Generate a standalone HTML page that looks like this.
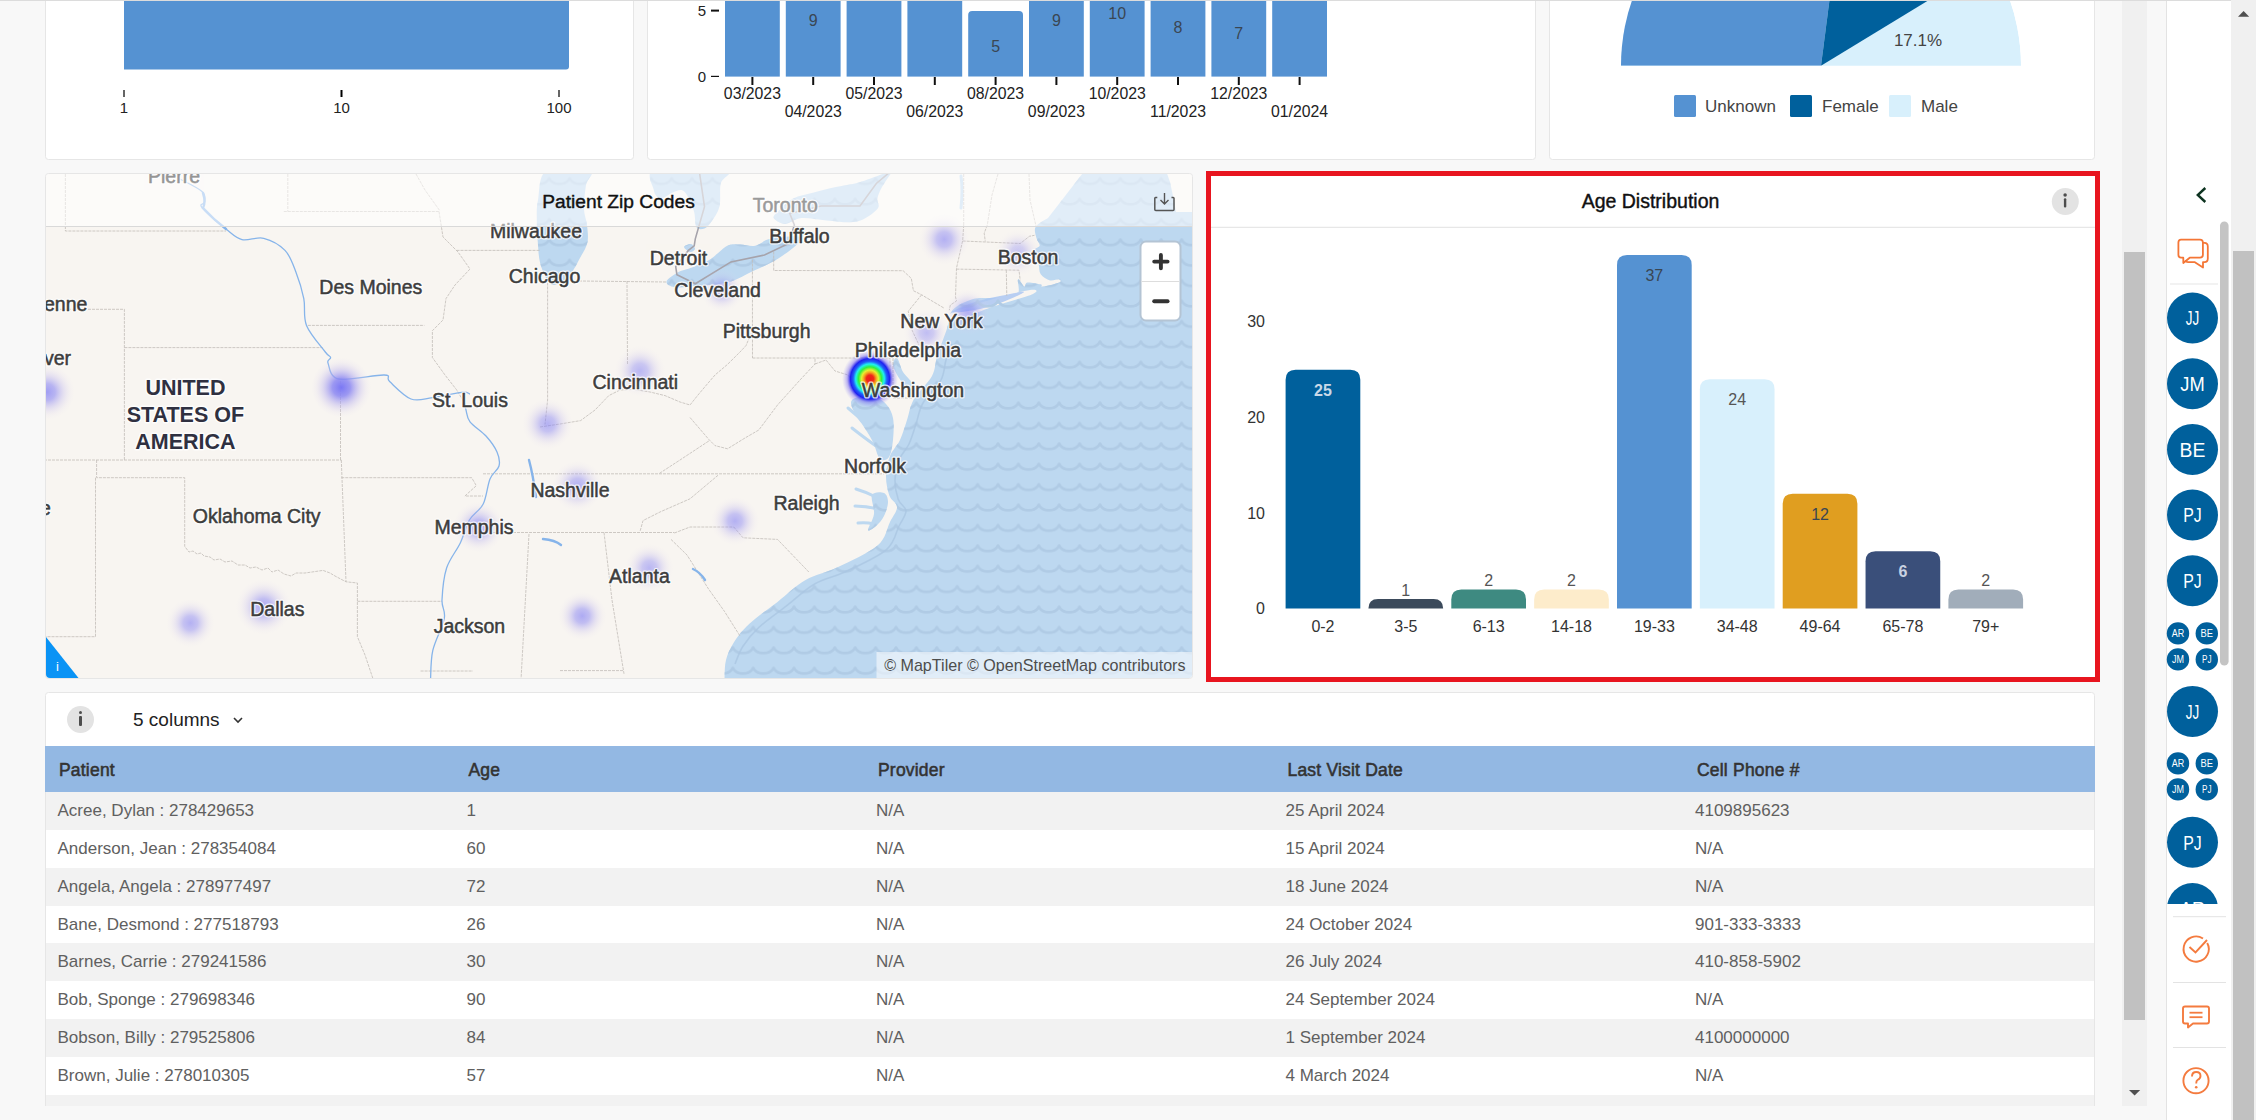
<!DOCTYPE html>
<html><head><meta charset="utf-8">
<style>
*{box-sizing:border-box;margin:0;padding:0}
html,body{width:2256px;height:1120px;overflow:hidden;background:#f8f8f8;font-family:"Liberation Sans",sans-serif}
.abs{position:absolute}
.card{position:absolute;background:#fff;border:1px solid #e6e6e6;border-radius:3.5px}
svg text{font-family:"Liberation Sans",sans-serif}
</style></head><body>

<!-- top cards -->
<div class="card" style="left:45px;top:-10px;width:589px;height:170px"></div>
<div class="card" style="left:647px;top:-10px;width:889px;height:170px"></div>
<div class="card" style="left:1549px;top:-10px;width:546px;height:170px"></div>

<svg class="abs" style="left:0;top:0" width="2166" height="160"><path d="M124 0 H569 V66.5 Q569 69.5 566 69.5 H124 Z" fill="#5592d2"/><rect x="123.4" y="90" width="1.2" height="7" fill="#000"/><rect x="340.5" y="90" width="2" height="7" fill="#000"/><rect x="558.4" y="90" width="1.2" height="7" fill="#000"/><text x="124" y="113" font-size="15" fill="#222" text-anchor="middle">1</text><text x="341.5" y="113" font-size="15" fill="#222" text-anchor="middle">10</text><text x="559" y="113" font-size="15" fill="#222" text-anchor="middle">100</text><rect x="725.0" y="0" width="54.8" height="76.6" fill="#5592d2"/><rect x="751.4" y="77" width="2" height="8" fill="#111"/><text x="752.4" y="99" font-size="15.8" fill="#222" text-anchor="middle">03/2023</text><rect x="785.8" y="0" width="54.8" height="76.6" fill="#5592d2"/><rect x="812.1999999999999" y="77" width="2" height="8" fill="#111"/><text x="813.1999999999999" y="117" font-size="15.8" fill="#222" text-anchor="middle">04/2023</text><text x="813.1999999999999" y="26" font-size="16" fill="#3a4653" text-anchor="middle">9</text><rect x="846.6" y="0" width="54.8" height="76.6" fill="#5592d2"/><rect x="873.0" y="77" width="2" height="8" fill="#111"/><text x="874.0" y="99" font-size="15.8" fill="#222" text-anchor="middle">05/2023</text><rect x="907.4" y="0" width="54.8" height="76.6" fill="#5592d2"/><rect x="933.8" y="77" width="2" height="8" fill="#111"/><text x="934.8" y="117" font-size="15.8" fill="#222" text-anchor="middle">06/2023</text><path d="M968.2 76.6 V15.1 Q968.2 11.1 972.2 11.1 H1019.0 Q1023.0 11.1 1023.0 15.1 V76.6 Z" fill="#5592d2"/><rect x="994.6" y="77" width="2" height="8" fill="#111"/><text x="995.6" y="99" font-size="15.8" fill="#222" text-anchor="middle">08/2023</text><text x="995.6" y="52" font-size="16" fill="#3a4653" text-anchor="middle">5</text><rect x="1029.0" y="0" width="54.8" height="76.6" fill="#5592d2"/><rect x="1055.4" y="77" width="2" height="8" fill="#111"/><text x="1056.4" y="117" font-size="15.8" fill="#222" text-anchor="middle">09/2023</text><text x="1056.4" y="26" font-size="16" fill="#3a4653" text-anchor="middle">9</text><rect x="1089.8" y="0" width="54.8" height="76.6" fill="#5592d2"/><rect x="1116.2" y="77" width="2" height="8" fill="#111"/><text x="1117.2" y="99" font-size="15.8" fill="#222" text-anchor="middle">10/2023</text><text x="1117.2" y="19" font-size="16" fill="#3a4653" text-anchor="middle">10</text><rect x="1150.6" y="0" width="54.8" height="76.6" fill="#5592d2"/><rect x="1177.0" y="77" width="2" height="8" fill="#111"/><text x="1178.0" y="117" font-size="15.8" fill="#222" text-anchor="middle">11/2023</text><text x="1178.0" y="33" font-size="16" fill="#3a4653" text-anchor="middle">8</text><rect x="1211.4" y="0" width="54.8" height="76.6" fill="#5592d2"/><rect x="1237.8000000000002" y="77" width="2" height="8" fill="#111"/><text x="1238.8000000000002" y="99" font-size="15.8" fill="#222" text-anchor="middle">12/2023</text><text x="1238.8000000000002" y="39" font-size="16" fill="#3a4653" text-anchor="middle">7</text><rect x="1272.1999999999998" y="0" width="54.8" height="76.6" fill="#5592d2"/><rect x="1298.6" y="77" width="2" height="8" fill="#111"/><text x="1299.6" y="117" font-size="15.8" fill="#222" text-anchor="middle">01/2024</text><rect x="711" y="9.6" width="8" height="2" fill="#111"/><rect x="711" y="75.8" width="8" height="1.2" fill="#111"/><text x="706" y="16" font-size="15" fill="#222" text-anchor="end">5</text><text x="706" y="82" font-size="15" fill="#222" text-anchor="end">0</text><clipPath id="pc"><path d="M1621 65.7 A200 200 0 0 1 2021 65.7 Z"/></clipPath><g clip-path="url(#pc)"><circle cx="1821" cy="65.7" r="200" fill="#d8f0fc"/><path d="M1821 65.7 L1521 65.7 L1521 -300 L1855.0 -197.10000000000002 Z" fill="#5592d2"/><path d="M1821 65.7 L1855.0 -197.10000000000002 L2253 -197.10000000000002 Z" fill="#00609c"/></g><text x="1918" y="45.5" font-size="17" fill="#444" text-anchor="middle">17.1%</text><rect x="1674" y="95" width="22" height="22" rx="1.5" fill="#5592d2"/><text x="1705" y="112" font-size="17" fill="#444">Unknown</text><rect x="1790" y="95" width="22" height="22" rx="1.5" fill="#00609c"/><text x="1822" y="112" font-size="17" fill="#444">Female</text><rect x="1889" y="95" width="22" height="22" rx="1.5" fill="#d8f0fc"/><text x="1921" y="112" font-size="17" fill="#444">Male</text></svg>
<!-- map card -->
<div class="card" style="left:45px;top:173px;width:1148px;height:506px"></div>
<!--MAPSTART--><svg class="abs" style="left:0;top:0" width="1200" height="690">
<defs>
<clipPath id="mc"><rect x="46" y="174" width="1146" height="504" rx="4"/></clipPath>
<pattern id="wv" patternUnits="userSpaceOnUse" x="18.8" y="11.6" width="20.4" height="20.4"><path d="M-0.3 2.6 C2.8 11.2 17.6 11.2 20.7 2.6" stroke="#b0cbe5" stroke-width="2.6" fill="none" stroke-linejoin="round"/></pattern>
<radialGradient id="hs"><stop offset="0" stop-color="#7b78f4" stop-opacity="1"/><stop offset="0.3" stop-color="#8c88f2" stop-opacity="0.85"/><stop offset="0.6" stop-color="#b8b0ee" stop-opacity="0.45"/><stop offset="0.85" stop-color="#d8d0ee" stop-opacity="0.15"/><stop offset="1" stop-color="#e0d8f0" stop-opacity="0"/></radialGradient>
<radialGradient id="hw" cx="0.5" cy="0.5" r="0.5"><stop offset="0" stop-color="#ee1a1a"/><stop offset="0.13" stop-color="#f02818"/><stop offset="0.22" stop-color="#f5a020"/><stop offset="0.3" stop-color="#e8f030"/><stop offset="0.41" stop-color="#30f040"/><stop offset="0.51" stop-color="#20f0f0"/><stop offset="0.6" stop-color="#2060f8"/><stop offset="0.7" stop-color="#2020f0"/><stop offset="0.82" stop-color="#7060f0" stop-opacity="0.45"/><stop offset="1" stop-color="#a098f0" stop-opacity="0"/></radialGradient>
</defs>
<g clip-path="url(#mc)">
<rect x="45" y="173" width="1148" height="506" fill="#f8f5f1"/>
<path d="M1048.0 218.0 C1045.9 219.5 1037.5 223.6 1035.6 227.0 C1033.7 230.4 1035.8 235.2 1036.5 238.3 C1037.2 241.4 1040.0 243.4 1039.7 245.5 C1039.4 247.6 1034.7 247.6 1034.5 250.7 C1034.3 253.8 1037.6 260.1 1038.6 264.0 C1039.6 267.9 1038.8 271.6 1040.7 274.3 C1042.6 277.0 1046.9 279.5 1050.0 280.4 C1053.1 281.2 1057.7 279.0 1059.2 279.4 C1060.7 279.8 1062.0 281.3 1059.2 282.5 C1056.5 283.7 1045.8 286.3 1042.7 286.6 C1039.6 286.9 1043.2 285.2 1040.7 284.5 C1038.2 283.8 1030.1 282.1 1027.4 282.5 C1024.7 282.9 1025.9 287.1 1024.3 286.6 C1022.7 286.1 1019.2 278.0 1018.0 279.4 C1016.8 280.8 1021.1 291.7 1017.0 294.8 C1012.9 297.9 1000.8 297.2 993.5 297.9 C986.2 298.6 979.9 296.9 973.0 299.0 C966.1 301.1 956.7 305.4 952.4 310.2 C948.1 315.0 948.9 322.7 947.3 327.7 C945.7 332.7 944.6 335.3 942.9 340.0 C941.2 344.7 938.8 350.0 937.0 356.0 C935.2 362.0 935.8 368.8 932.0 376.0 C928.2 383.2 918.2 391.7 914.0 399.0 C909.8 406.3 909.3 413.2 907.0 420.0 C904.7 426.8 902.8 434.0 900.0 440.0 C897.2 446.0 892.3 450.0 890.0 456.0 C887.7 462.0 886.1 469.4 886.0 476.0 C885.9 482.6 887.5 490.2 889.3 495.4 C891.1 500.6 896.9 502.6 897.0 507.0 C897.1 511.4 893.2 515.6 890.0 522.0 C886.8 528.4 886.3 538.0 877.5 545.6 C868.7 553.2 849.0 561.8 837.0 567.5 C825.0 573.2 815.5 574.3 805.6 580.0 C795.7 585.7 786.9 594.6 777.5 601.9 C768.1 609.2 756.7 617.0 749.4 623.8 C742.1 630.5 737.6 636.5 733.8 642.5 C729.9 648.5 727.6 653.8 726.0 660.0 C724.4 666.2 724.9 673.3 724.4 680.0 C723.9 686.7 723.2 696.7 723.0 700.0 L1210 700 L1210 212 L1176 212 L1173 196 L1170 182 L1164 165 L1089 165 L1062 200 Z" fill="#bdd8f0"/>
<path d="M961 176 Q963 190 961 208" stroke="#bdd8f0" stroke-width="3" fill="none" stroke-linecap="round"/>
<path d="M856 489 Q866 492 876 497" stroke="#bdd8f0" stroke-width="3" fill="none" stroke-linecap="round"/>
<path d="M855 506 Q866 506 878 509" stroke="#bdd8f0" stroke-width="3" fill="none" stroke-linecap="round"/>
<path d="M858 523 Q866 522 874 524" stroke="#bdd8f0" stroke-width="3" fill="none" stroke-linecap="round"/>
<path d="M848 408 Q860 418 873 430" stroke="#bdd8f0" stroke-width="3" fill="none" stroke-linecap="round"/>
<path d="M852 428 Q862 436 876 446" stroke="#bdd8f0" stroke-width="3" fill="none" stroke-linecap="round"/>
<path d="M547.0 170.0 C538.3 175.0 539.7 191.6 538.0 200.0 C536.3 208.4 536.8 213.0 536.8 220.5 C536.8 228.0 537.5 238.0 538.0 245.0 C538.5 252.0 538.7 257.1 540.0 262.6 C541.3 268.1 544.0 274.4 546.0 278.0 C548.0 281.6 549.3 283.8 552.0 284.5 C554.7 285.2 558.9 283.7 562.0 282.0 C565.1 280.3 567.5 278.4 570.5 274.4 C573.5 270.4 577.2 263.3 580.0 258.0 C582.8 252.7 586.2 247.9 587.4 242.4 C588.6 236.9 587.6 230.6 587.0 225.0 C586.4 219.4 584.2 215.4 584.0 208.7 C583.8 202.0 585.0 191.4 586.0 185.0 C587.0 178.6 596.5 172.5 590.0 170.0 C583.5 167.5 555.7 165.0 547.0 170.0 Z" fill="#bdd8f0"/>
<path d="M656.0 168.0 C643.6 171.7 653.0 184.9 653.8 190.0 C654.6 195.1 657.6 198.1 660.7 198.5 C663.8 198.9 668.6 194.0 672.3 192.7 C675.9 191.3 679.7 189.2 682.6 190.4 C685.5 191.6 687.7 196.0 689.6 199.7 C691.5 203.3 693.1 207.7 694.2 212.3 C695.4 216.9 694.8 224.6 696.5 227.3 C698.2 230.0 702.0 229.4 704.5 228.5 C707.0 227.6 709.0 225.2 711.5 221.6 C714.0 217.9 718.0 212.9 719.5 206.6 C721.0 200.2 719.3 189.9 720.7 183.5 C722.1 177.1 738.8 170.6 728.0 168.0 C717.2 165.4 668.4 164.3 656.0 168.0 Z" fill="#bdd8f0"/>
<path d="M666.5 281.5 C667.1 279.0 674.4 274.4 678.0 272.3 C681.6 270.2 684.7 270.2 688.4 268.8 C692.1 267.4 696.1 265.9 700.0 264.2 C703.9 262.5 706.9 261.5 711.5 258.4 C716.1 255.3 722.8 248.1 727.6 245.8 C732.4 243.5 735.7 244.6 740.3 244.6 C744.9 244.6 750.2 246.8 755.2 245.8 C760.2 244.8 762.9 240.4 770.2 238.8 C777.5 237.2 794.4 235.7 799.0 236.5 C803.6 237.3 801.4 239.8 797.9 243.5 C794.4 247.2 786.2 253.6 778.3 258.4 C770.4 263.2 759.0 268.3 750.6 272.3 C742.2 276.3 736.8 280.3 727.6 282.6 C718.4 284.9 704.1 285.3 695.3 286.1 C686.5 286.9 679.4 288.0 674.6 287.2 C669.8 286.4 665.9 284.0 666.5 281.5 Z" fill="#bdd8f0"/>
<path d="M773.7 218.1 C772.6 216.0 775.0 214.5 778.3 211.2 C781.6 207.9 787.5 201.6 793.3 198.5 C799.1 195.4 805.8 194.6 812.9 192.7 C820.0 190.8 828.2 188.7 835.9 187.0 C843.6 185.3 850.4 184.9 859.0 182.4 C867.6 179.9 882.1 174.1 887.8 172.0 C893.5 169.9 894.0 167.5 893.0 170.0 C892.0 172.5 884.6 182.2 882.0 187.0 C879.4 191.8 878.2 194.8 877.4 198.5 C876.6 202.2 880.8 205.1 877.4 208.9 C874.0 212.8 865.2 219.7 856.7 221.6 C848.2 223.5 835.9 221.0 826.7 220.4 C817.5 219.8 808.2 217.5 801.3 218.1 C794.4 218.7 789.8 223.9 785.2 223.9 C780.6 223.9 774.9 220.2 773.7 218.1 Z" fill="#bdd8f0"/>
<path d="M684.0 247.0 C684.2 245.7 689.2 243.7 691.0 244.0 C692.8 244.3 695.2 247.7 695.0 249.0 C694.8 250.3 691.8 252.3 690.0 252.0 C688.2 251.7 683.8 248.3 684.0 247.0 Z" fill="#bdd8f0"/>
<path d="M852.0 400.0 C854.8 397.0 866.3 395.3 872.0 396.0 C877.7 396.7 882.5 400.3 886.0 404.0 C889.5 407.7 891.8 412.0 893.0 418.0 C894.2 424.0 893.7 433.5 893.0 440.0 C892.3 446.5 891.2 453.8 889.0 457.0 C886.8 460.2 882.7 461.5 880.0 459.0 C877.3 456.5 875.7 447.3 873.0 442.0 C870.3 436.7 867.0 431.7 864.0 427.0 C861.0 422.3 857.0 418.5 855.0 414.0 C853.0 409.5 849.2 403.0 852.0 400.0 Z" fill="#bdd8f0"/>
<path d="M872.0 495.0 C873.7 491.5 881.3 491.8 884.0 493.0 C886.7 494.2 888.0 498.2 888.0 502.0 C888.0 505.8 886.0 512.0 884.0 516.0 C882.0 520.0 878.7 523.7 876.0 526.0 C873.3 528.3 868.3 532.0 868.0 530.0 C867.7 528.0 873.3 519.8 874.0 514.0 C874.7 508.2 870.3 498.5 872.0 495.0 Z" fill="#bdd8f0"/>
<path d="M897.0 358.0 C898.7 359.2 900.5 367.8 903.0 372.0 C905.5 376.2 911.2 380.3 912.0 383.0 C912.8 385.7 910.2 388.8 908.0 388.0 C905.8 387.2 901.5 381.8 899.0 378.0 C896.5 374.2 893.3 368.3 893.0 365.0 C892.7 361.7 895.3 356.8 897.0 358.0 Z" fill="#bdd8f0"/>
<path d="M950.0 314.0 C955.8 310.7 976.7 304.0 990.0 300.0 C1003.3 296.0 1022.8 291.0 1030.0 290.0 C1037.2 289.0 1038.8 291.3 1033.0 294.0 C1027.2 296.7 1008.0 301.7 995.0 306.0 C982.0 310.3 962.5 318.7 955.0 320.0 C947.5 321.3 944.2 317.3 950.0 314.0 Z" fill="#f8f5f1"/>
<path d="M952.0 312.0 C952.0 310.7 967.0 304.7 975.0 302.0 C983.0 299.3 991.8 297.7 1000.0 296.0 C1008.2 294.3 1024.0 290.8 1024.0 292.0 C1024.0 293.2 1008.2 300.0 1000.0 303.0 C991.8 306.0 983.0 308.5 975.0 310.0 C967.0 311.5 952.0 313.3 952.0 312.0 Z" fill="#a8c4f2" opacity="0.8"/>
<clipPath id="oc"><path d="M1048.0 218.0 C1045.9 219.5 1037.5 223.6 1035.6 227.0 C1033.7 230.4 1035.8 235.2 1036.5 238.3 C1037.2 241.4 1040.0 243.4 1039.7 245.5 C1039.4 247.6 1034.7 247.6 1034.5 250.7 C1034.3 253.8 1037.6 260.1 1038.6 264.0 C1039.6 267.9 1038.8 271.6 1040.7 274.3 C1042.6 277.0 1046.9 279.5 1050.0 280.4 C1053.1 281.2 1057.7 279.0 1059.2 279.4 C1060.7 279.8 1062.0 281.3 1059.2 282.5 C1056.5 283.7 1045.8 286.3 1042.7 286.6 C1039.6 286.9 1043.2 285.2 1040.7 284.5 C1038.2 283.8 1030.1 282.1 1027.4 282.5 C1024.7 282.9 1025.9 287.1 1024.3 286.6 C1022.7 286.1 1019.2 278.0 1018.0 279.4 C1016.8 280.8 1021.1 291.7 1017.0 294.8 C1012.9 297.9 1000.8 297.2 993.5 297.9 C986.2 298.6 979.9 296.9 973.0 299.0 C966.1 301.1 956.7 305.4 952.4 310.2 C948.1 315.0 948.9 322.7 947.3 327.7 C945.7 332.7 944.6 335.3 942.9 340.0 C941.2 344.7 938.8 350.0 937.0 356.0 C935.2 362.0 935.8 368.8 932.0 376.0 C928.2 383.2 918.2 391.7 914.0 399.0 C909.8 406.3 909.3 413.2 907.0 420.0 C904.7 426.8 902.8 434.0 900.0 440.0 C897.2 446.0 892.3 450.0 890.0 456.0 C887.7 462.0 886.1 469.4 886.0 476.0 C885.9 482.6 887.5 490.2 889.3 495.4 C891.1 500.6 896.9 502.6 897.0 507.0 C897.1 511.4 893.2 515.6 890.0 522.0 C886.8 528.4 886.3 538.0 877.5 545.6 C868.7 553.2 849.0 561.8 837.0 567.5 C825.0 573.2 815.5 574.3 805.6 580.0 C795.7 585.7 786.9 594.6 777.5 601.9 C768.1 609.2 756.7 617.0 749.4 623.8 C742.1 630.5 737.6 636.5 733.8 642.5 C729.9 648.5 727.6 653.8 726.0 660.0 C724.4 666.2 724.9 673.3 724.4 680.0 C723.9 686.7 723.2 696.7 723.0 700.0 L1210 700 L1210 212 L1176 212 L1173 196 L1170 182 L1164 165 L1089 165 L1062 200 Z"/><path d="M547.0 170.0 C538.3 175.0 539.7 191.6 538.0 200.0 C536.3 208.4 536.8 213.0 536.8 220.5 C536.8 228.0 537.5 238.0 538.0 245.0 C538.5 252.0 538.7 257.1 540.0 262.6 C541.3 268.1 544.0 274.4 546.0 278.0 C548.0 281.6 549.3 283.8 552.0 284.5 C554.7 285.2 558.9 283.7 562.0 282.0 C565.1 280.3 567.5 278.4 570.5 274.4 C573.5 270.4 577.2 263.3 580.0 258.0 C582.8 252.7 586.2 247.9 587.4 242.4 C588.6 236.9 587.6 230.6 587.0 225.0 C586.4 219.4 584.2 215.4 584.0 208.7 C583.8 202.0 585.0 191.4 586.0 185.0 C587.0 178.6 596.5 172.5 590.0 170.0 C583.5 167.5 555.7 165.0 547.0 170.0 Z"/><path d="M656.0 168.0 C643.6 171.7 653.0 184.9 653.8 190.0 C654.6 195.1 657.6 198.1 660.7 198.5 C663.8 198.9 668.6 194.0 672.3 192.7 C675.9 191.3 679.7 189.2 682.6 190.4 C685.5 191.6 687.7 196.0 689.6 199.7 C691.5 203.3 693.1 207.7 694.2 212.3 C695.4 216.9 694.8 224.6 696.5 227.3 C698.2 230.0 702.0 229.4 704.5 228.5 C707.0 227.6 709.0 225.2 711.5 221.6 C714.0 217.9 718.0 212.9 719.5 206.6 C721.0 200.2 719.3 189.9 720.7 183.5 C722.1 177.1 738.8 170.6 728.0 168.0 C717.2 165.4 668.4 164.3 656.0 168.0 Z"/><path d="M666.5 281.5 C667.1 279.0 674.4 274.4 678.0 272.3 C681.6 270.2 684.7 270.2 688.4 268.8 C692.1 267.4 696.1 265.9 700.0 264.2 C703.9 262.5 706.9 261.5 711.5 258.4 C716.1 255.3 722.8 248.1 727.6 245.8 C732.4 243.5 735.7 244.6 740.3 244.6 C744.9 244.6 750.2 246.8 755.2 245.8 C760.2 244.8 762.9 240.4 770.2 238.8 C777.5 237.2 794.4 235.7 799.0 236.5 C803.6 237.3 801.4 239.8 797.9 243.5 C794.4 247.2 786.2 253.6 778.3 258.4 C770.4 263.2 759.0 268.3 750.6 272.3 C742.2 276.3 736.8 280.3 727.6 282.6 C718.4 284.9 704.1 285.3 695.3 286.1 C686.5 286.9 679.4 288.0 674.6 287.2 C669.8 286.4 665.9 284.0 666.5 281.5 Z"/><path d="M773.7 218.1 C772.6 216.0 775.0 214.5 778.3 211.2 C781.6 207.9 787.5 201.6 793.3 198.5 C799.1 195.4 805.8 194.6 812.9 192.7 C820.0 190.8 828.2 188.7 835.9 187.0 C843.6 185.3 850.4 184.9 859.0 182.4 C867.6 179.9 882.1 174.1 887.8 172.0 C893.5 169.9 894.0 167.5 893.0 170.0 C892.0 172.5 884.6 182.2 882.0 187.0 C879.4 191.8 878.2 194.8 877.4 198.5 C876.6 202.2 880.8 205.1 877.4 208.9 C874.0 212.8 865.2 219.7 856.7 221.6 C848.2 223.5 835.9 221.0 826.7 220.4 C817.5 219.8 808.2 217.5 801.3 218.1 C794.4 218.7 789.8 223.9 785.2 223.9 C780.6 223.9 774.9 220.2 773.7 218.1 Z"/><path d="M684.0 247.0 C684.2 245.7 689.2 243.7 691.0 244.0 C692.8 244.3 695.2 247.7 695.0 249.0 C694.8 250.3 691.8 252.3 690.0 252.0 C688.2 251.7 683.8 248.3 684.0 247.0 Z"/><path d="M852.0 400.0 C854.8 397.0 866.3 395.3 872.0 396.0 C877.7 396.7 882.5 400.3 886.0 404.0 C889.5 407.7 891.8 412.0 893.0 418.0 C894.2 424.0 893.7 433.5 893.0 440.0 C892.3 446.5 891.2 453.8 889.0 457.0 C886.8 460.2 882.7 461.5 880.0 459.0 C877.3 456.5 875.7 447.3 873.0 442.0 C870.3 436.7 867.0 431.7 864.0 427.0 C861.0 422.3 857.0 418.5 855.0 414.0 C853.0 409.5 849.2 403.0 852.0 400.0 Z"/><path d="M872.0 495.0 C873.7 491.5 881.3 491.8 884.0 493.0 C886.7 494.2 888.0 498.2 888.0 502.0 C888.0 505.8 886.0 512.0 884.0 516.0 C882.0 520.0 878.7 523.7 876.0 526.0 C873.3 528.3 868.3 532.0 868.0 530.0 C867.7 528.0 873.3 519.8 874.0 514.0 C874.7 508.2 870.3 498.5 872.0 495.0 Z"/><path d="M897.0 358.0 C898.7 359.2 900.5 367.8 903.0 372.0 C905.5 376.2 911.2 380.3 912.0 383.0 C912.8 385.7 910.2 388.8 908.0 388.0 C905.8 387.2 901.5 381.8 899.0 378.0 C896.5 374.2 893.3 368.3 893.0 365.0 C892.7 361.7 895.3 356.8 897.0 358.0 Z"/></clipPath>
<rect x="45" y="173" width="1148" height="506" fill="url(#wv)" clip-path="url(#oc)"/>
<path d="M942.9 340.0 C941.9 342.7 938.8 350.0 937.0 356.0 C935.2 362.0 935.8 368.8 932.0 376.0 C928.2 383.2 918.2 391.7 914.0 399.0 C909.8 406.3 909.3 413.2 907.0 420.0 C904.7 426.8 902.8 434.0 900.0 440.0 C897.2 446.0 892.3 450.0 890.0 456.0 C887.7 462.0 886.1 469.4 886.0 476.0 C885.9 482.6 887.5 490.2 889.3 495.4 C891.1 500.6 896.9 502.6 897.0 507.0 C897.1 511.4 893.2 515.6 890.0 522.0 C886.8 528.4 886.3 538.0 877.5 545.6 C868.7 553.2 849.0 561.8 837.0 567.5 C825.0 573.2 815.5 574.3 805.6 580.0 C795.7 585.7 786.9 594.6 777.5 601.9 C768.1 609.2 756.7 617.0 749.4 623.8 C742.1 630.5 737.6 636.5 733.8 642.5 C729.9 648.5 727.3 657.1 726.0 660.0" stroke="#a9c6e2" stroke-width="1.6" fill="none" transform="translate(9,4)" opacity="0.75"/>
<path d="M65.4 174.0 L65.4 231.0 L226.0 231.0" stroke="#c2bdb8" stroke-width="0.8" stroke-dasharray="3 1" fill="none"/>
<path d="M44.0 309.3 L124.4 309.3 L124.4 460.0" stroke="#c2bdb8" stroke-width="0.8" stroke-dasharray="3 1" fill="none"/>
<path d="M124.4 347.6 L322.6 347.6" stroke="#c2bdb8" stroke-width="0.8" stroke-dasharray="3 1" fill="none"/>
<path d="M44.0 460.0 L341.3 460.0" stroke="#c2bdb8" stroke-width="0.8" stroke-dasharray="3 1" fill="none"/>
<path d="M287.8 174.0 L287.8 211.5" stroke="#c2bdb8" stroke-width="0.8" stroke-dasharray="3 1" fill="none"/>
<path d="M283.8 211.5 L439.0 211.5" stroke="#c2bdb8" stroke-width="0.8" stroke-dasharray="3 1" fill="none"/>
<path d="M307.9 325.4 L424.4 325.4" stroke="#c2bdb8" stroke-width="0.8" stroke-dasharray="3 1" fill="none"/>
<path d="M439.0 211.5 L443.0 237.0 L458.0 252.0 L470.0 269.0 L455.0 285.0 L446.0 298.6 L443.0 320.0 L432.4 330.7 L432.4 357.5 L445.0 375.0 L456.5 389.7 L464.6 403.0" stroke="#c2bdb8" stroke-width="0.8" stroke-dasharray="3 1" fill="none"/>
<path d="M416.0 174.0 L425.0 190.0 L440.0 211.0" stroke="#c2bdb8" stroke-width="0.8" stroke-dasharray="3 1" fill="none"/>
<path d="M456.5 250.4 L539.6 250.4" stroke="#c2bdb8" stroke-width="0.8" stroke-dasharray="3 1" fill="none"/>
<path d="M547.6 282.5 L547.6 400.0 L545.0 424.5" stroke="#c2bdb8" stroke-width="0.8" stroke-dasharray="3 1" fill="none"/>
<path d="M579.0 281.0 L666.5 282.0" stroke="#c2bdb8" stroke-width="0.8" stroke-dasharray="3 1" fill="none"/>
<path d="M627.0 281.0 L627.5 365.0" stroke="#c2bdb8" stroke-width="0.8" stroke-dasharray="3 1" fill="none"/>
<path d="M752.4 259.6 L752.5 358.0" stroke="#c2bdb8" stroke-width="0.8" stroke-dasharray="3 1" fill="none"/>
<path d="M773.7 251.5 L773.7 270.5 L903.1 270.7 L911.3 278.4 L913.4 290.7 L921.6 294.8 L944.2 308.2" stroke="#c2bdb8" stroke-width="0.8" stroke-dasharray="3 1" fill="none"/>
<path d="M921.6 294.8 L908.3 311.2 L912.0 330.0 L919.0 345.0" stroke="#c2bdb8" stroke-width="0.8" stroke-dasharray="3 1" fill="none"/>
<path d="M752.5 358.0 L890.0 358.0 L890.0 380.0" stroke="#c2bdb8" stroke-width="0.8" stroke-dasharray="3 1" fill="none"/>
<path d="M963.7 225.0 L962.7 240.4 L956.5 268.1 L955.5 296.9 L956.5 301.0 L950.3 305.1 L949.3 310.2" stroke="#c2bdb8" stroke-width="0.8" stroke-dasharray="3 1" fill="none"/>
<path d="M987.3 225.0 L984.2 233.2 L985.3 241.4" stroke="#c2bdb8" stroke-width="0.8" stroke-dasharray="3 1" fill="none"/>
<path d="M962.7 241.0 L1020.2 243.5 L1029.4 236.3 L1034.5 235.3" stroke="#c2bdb8" stroke-width="0.8" stroke-dasharray="3 1" fill="none"/>
<path d="M956.5 269.1 L1019.0 270.2 L1020.2 280.4" stroke="#c2bdb8" stroke-width="0.8" stroke-dasharray="3 1" fill="none"/>
<path d="M1006.3 270.2 L1006.8 295.8" stroke="#c2bdb8" stroke-width="0.8" stroke-dasharray="3 1" fill="none"/>
<path d="M96.6 460.0 L96.6 477.7 L184.7 477.7 L184.7 546.4 L189.0 552.0 L193.0 551.0 L197.0 554.0 L201.0 553.0 L204.0 556.0 L210.0 557.0 L214.0 560.0 L220.0 559.0 L225.0 562.0 L232.0 561.0 L238.0 565.0 L245.0 565.0 L250.0 568.0 L256.0 567.0 L262.0 570.0 L268.0 568.0 L272.0 572.0 L278.0 570.0 L284.0 574.0 L291.0 576.0 L296.0 573.0 L305.0 573.0 L312.0 572.0 L323.0 570.4 L330.0 573.0 L335.0 576.0 L346.0 581.8 L357.4 583.0 L357.4 636.7 L365.0 655.0 L373.4 680.0" stroke="#c2bdb8" stroke-width="0.8" stroke-dasharray="3 1" fill="none"/>
<path d="M95.5 477.7 L95.5 636.7 L44.0 636.7" stroke="#c2bdb8" stroke-width="0.8" stroke-dasharray="3 1" fill="none"/>
<path d="M341.3 460.0 L346.0 581.8" stroke="#c2bdb8" stroke-width="0.8" stroke-dasharray="3 1" fill="none"/>
<path d="M341.3 477.7 L471.7 477.7 L476.3 485.7 L464.9 496.0 L483.0 496.0" stroke="#c2bdb8" stroke-width="0.8" stroke-dasharray="3 1" fill="none"/>
<path d="M357.4 601.3 L442.0 601.3" stroke="#c2bdb8" stroke-width="0.8" stroke-dasharray="3 1" fill="none"/>
<path d="M420.6 671.0 L473.0 671.0" stroke="#c2bdb8" stroke-width="0.8" stroke-dasharray="3 1" fill="none"/>
<path d="M483.0 473.8 L884.0 473.8" stroke="#c2bdb8" stroke-width="0.8" stroke-dasharray="3 1" fill="none"/>
<path d="M477.0 532.5 L674.4 532.5" stroke="#c2bdb8" stroke-width="0.8" stroke-dasharray="3 1" fill="none"/>
<path d="M529.0 534.0 L521.0 680.0" stroke="#c2bdb8" stroke-width="0.8" stroke-dasharray="3 1" fill="none"/>
<path d="M604.0 532.5 L612.0 600.0 L624.0 673.8" stroke="#c2bdb8" stroke-width="0.8" stroke-dasharray="3 1" fill="none"/>
<path d="M560.0 670.6 L624.0 670.6" stroke="#c2bdb8" stroke-width="0.8" stroke-dasharray="3 1" fill="none"/>
<path d="M540.0 427.0 L560.0 424.0 L580.6 420.6 L595.0 410.0 L608.8 395.6 L620.0 390.0 L633.8 389.4 L650.0 392.0 L665.0 395.6 L680.0 402.0 L690.0 405.0 L698.0 395.0 L705.6 386.0 L715.0 375.0 L727.5 364.4 L740.0 352.0 L746.0 345.6 L752.5 330.0" stroke="#c2bdb8" stroke-width="0.8" stroke-dasharray="3 1" fill="none"/>
<path d="M690.0 417.5 L708.8 439.4 L715.0 445.6 L727.5 448.8 L745.0 438.0 L758.8 430.0 L777.5 405.0 L800.0 380.0 L815.0 364.0 L815.0 358.0" stroke="#c2bdb8" stroke-width="0.8" stroke-dasharray="3 1" fill="none"/>
<path d="M815.0 364.0 L826.0 360.0 L835.0 371.0 L848.0 375.0 L855.0 384.0" stroke="#c2bdb8" stroke-width="0.8" stroke-dasharray="3 1" fill="none"/>
<path d="M708.8 441.0 L680.0 460.0 L658.8 473.8" stroke="#c2bdb8" stroke-width="0.8" stroke-dasharray="3 1" fill="none"/>
<path d="M718.0 475.3 L690.0 498.8 L660.0 512.0 L643.0 520.6 L640.0 531.6" stroke="#c2bdb8" stroke-width="0.8" stroke-dasharray="3 1" fill="none"/>
<path d="M674.4 533.0 L690.0 527.0 L733.8 527.0 L743.0 537.8 L777.5 539.4 L808.8 572.0" stroke="#c2bdb8" stroke-width="0.8" stroke-dasharray="3 1" fill="none"/>
<path d="M671.0 539.4 L687.0 555.0 L708.8 589.4 L724.4 611.3 L740.0 636.0" stroke="#c2bdb8" stroke-width="0.8" stroke-dasharray="3 1" fill="none"/>
<path d="M893.0 358.0 L893.0 398.0 L912.0 398.0" stroke="#c2bdb8" stroke-width="0.8" stroke-dasharray="3 1" fill="none"/>
<path d="M340.5 381.0 L340.5 460.0" stroke="#c2bdb8" stroke-width="0.8" stroke-dasharray="3 1" fill="none"/>
<path d="M963.7 174.0 L963.7 225.0" stroke="#c2bdb8" stroke-width="0.8" stroke-dasharray="3 1" fill="none"/>
<path d="M998.0 174.0 L992.0 195.0 L987.3 225.0" stroke="#c2bdb8" stroke-width="0.8" stroke-dasharray="3 1" fill="none"/>
<path d="M1029.0 174.0 L1030.0 200.0 L1036.0 226.0" stroke="#c2bdb8" stroke-width="0.8" stroke-dasharray="3 1" fill="none"/>
<path d="M178.0 178.0 C182.0 180.2 197.6 187.4 202.0 191.4 C206.4 195.4 204.7 199.3 204.7 202.0 C204.7 204.7 198.4 203.0 202.0 207.5 C205.6 212.0 219.3 223.7 226.0 229.0 C232.7 234.3 235.7 238.0 242.0 239.6 C248.3 241.2 256.5 236.5 263.7 238.3 C270.9 240.1 279.6 244.8 285.0 250.4 C290.4 256.0 292.7 263.8 295.8 271.8 C298.9 279.8 302.0 289.7 303.8 298.6 C305.6 307.5 302.9 316.5 306.5 325.4 C310.1 334.3 321.3 346.6 325.3 352.0 C329.3 357.4 330.2 355.7 330.6 357.5 C331.1 359.3 326.6 359.3 328.0 362.9 C329.4 366.5 329.3 377.0 338.7 379.0 C348.1 381.0 375.7 374.6 384.2 375.0 C392.7 375.4 385.1 377.6 389.6 381.6 C394.1 385.6 403.9 396.3 411.0 399.0 C418.1 401.7 423.9 398.8 432.4 397.7 C440.9 396.6 455.6 392.9 461.9 392.3 C468.2 391.7 468.6 393.7 470.0 394.0" stroke="#86b4ea" stroke-width="1.3" fill="none"/>
<path d="M464.6 403.0 C464.8 404.2 465.1 406.9 466.0 410.0 C466.9 413.1 466.7 417.5 470.0 421.8 C473.3 426.1 481.5 431.0 486.0 436.0 C490.5 441.0 494.8 447.0 497.0 452.0 C499.2 457.0 500.2 461.5 499.0 466.0 C497.8 470.5 492.6 472.6 490.0 478.9 C487.4 485.2 486.6 497.1 483.2 504.0 C479.8 510.9 473.2 513.5 469.4 520.0 C465.6 526.5 464.1 535.0 460.3 543.0 C456.5 551.0 449.7 558.5 446.6 568.0 C443.6 577.5 442.4 591.6 442.0 600.0 C441.6 608.4 445.8 610.0 444.3 618.4 C442.8 626.8 435.1 640.1 432.8 650.4 C430.5 660.7 430.9 675.1 430.5 680.0" stroke="#86b4ea" stroke-width="1.3" fill="none"/>
<path d="M529 460 Q533 475 536 497" stroke="#86b4ea" stroke-width="2.4" fill="none" stroke-linecap="round"/>
<path d="M543 539 Q555 540 561 545" stroke="#86b4ea" stroke-width="2.4" fill="none" stroke-linecap="round"/>
<path d="M693 569 Q700 572 705 580" stroke="#86b4ea" stroke-width="2.4" fill="none" stroke-linecap="round"/>
<path d="M203 193 Q206 202 203 208 Q214 220 226 229" stroke="#86b4ea" stroke-width="2.4" fill="none" stroke-linecap="round"/>
<path d="M699.4 172.0 L704.5 206.6 L695.3 238.8 L694.2 245.8 L688.4 250.4 L675.7 266.5 L676.9 274.6 L695.3 283.8 L731.0 261.9 L764.5 255.0 L788.7 243.5 L794.4 225.0 L789.8 213.5 L821.0 206.0 L860.0 206.0 L876.3 183.5 L890.0 172.0" stroke="#a6a3ab" stroke-width="1.6" fill="none"/>
<circle cx="341.3" cy="387.5" r="29.9" fill="url(#hs)" opacity="1.0"/>
<circle cx="47" cy="392" r="27.6" fill="url(#hs)" opacity="0.7"/>
<circle cx="547.6" cy="424" r="25.3" fill="url(#hs)" opacity="0.55"/>
<circle cx="640" cy="371" r="25.3" fill="url(#hs)" opacity="0.5"/>
<circle cx="577.5" cy="486" r="25.3" fill="url(#hs)" opacity="0.55"/>
<circle cx="478.6" cy="527" r="25.3" fill="url(#hs)" opacity="0.6"/>
<circle cx="649.4" cy="568" r="24.1" fill="url(#hs)" opacity="0.5"/>
<circle cx="582.2" cy="616" r="24.1" fill="url(#hs)" opacity="0.6"/>
<circle cx="190.4" cy="623" r="24.1" fill="url(#hs)" opacity="0.55"/>
<circle cx="263.6" cy="607" r="27.6" fill="url(#hs)" opacity="0.6"/>
<circle cx="735" cy="521" r="24.1" fill="url(#hs)" opacity="0.55"/>
<circle cx="944.2" cy="239.4" r="25.3" fill="url(#hs)" opacity="0.55"/>
<circle cx="1018" cy="252.7" r="23.0" fill="url(#hs)" opacity="0.4"/>
<circle cx="926.7" cy="332.8" r="23.0" fill="url(#hs)" opacity="0.45"/>
<circle cx="967.8" cy="312.3" r="23.0" fill="url(#hs)" opacity="0.55"/>
<circle cx="722" cy="290" r="21.8" fill="url(#hs)" opacity="0.5"/>
<ellipse cx="870" cy="378.8" rx="28" ry="29" fill="url(#hw)"/>
</g></svg><svg class="abs" style="left:0;top:0" width="1200" height="690">
<g clip-path="url(#mc)">
<text x="370.8" y="294.0" font-size="19.5" text-anchor="middle" fill="#fff" stroke="#fff" stroke-width="3" stroke-linejoin="round" opacity="0.8">Des Moines</text><text x="370.8" y="294.0" font-size="19.5" text-anchor="middle" fill="#3d3d3d" stroke="#3d3d3d" stroke-width="0.5">Des Moines</text>
<text x="470" y="406.6" font-size="19.5" text-anchor="middle" fill="#fff" stroke="#fff" stroke-width="3" stroke-linejoin="round" opacity="0.8">St. Louis</text><text x="470" y="406.6" font-size="19.5" text-anchor="middle" fill="#3d3d3d" stroke="#3d3d3d" stroke-width="0.5">St. Louis</text>
<text x="544.5" y="283.0" font-size="19.5" text-anchor="middle" fill="#fff" stroke="#fff" stroke-width="3" stroke-linejoin="round" opacity="0.8">Chicago</text><text x="544.5" y="283.0" font-size="19.5" text-anchor="middle" fill="#3d3d3d" stroke="#3d3d3d" stroke-width="0.5">Chicago</text>
<text x="536" y="237.5" font-size="19.5" text-anchor="middle" fill="#fff" stroke="#fff" stroke-width="3" stroke-linejoin="round" opacity="0.8">Milwaukee</text><text x="536" y="237.5" font-size="19.5" text-anchor="middle" fill="#3d3d3d" stroke="#3d3d3d" stroke-width="0.5">Milwaukee</text>
<text x="678.5" y="265.0" font-size="19.5" text-anchor="middle" fill="#fff" stroke="#fff" stroke-width="3" stroke-linejoin="round" opacity="0.8">Detroit</text><text x="678.5" y="265.0" font-size="19.5" text-anchor="middle" fill="#3d3d3d" stroke="#3d3d3d" stroke-width="0.5">Detroit</text>
<text x="717.5" y="297.0" font-size="19.5" text-anchor="middle" fill="#fff" stroke="#fff" stroke-width="3" stroke-linejoin="round" opacity="0.8">Cleveland</text><text x="717.5" y="297.0" font-size="19.5" text-anchor="middle" fill="#3d3d3d" stroke="#3d3d3d" stroke-width="0.5">Cleveland</text>
<text x="799.5" y="243.0" font-size="19.5" text-anchor="middle" fill="#fff" stroke="#fff" stroke-width="3" stroke-linejoin="round" opacity="0.8">Buffalo</text><text x="799.5" y="243.0" font-size="19.5" text-anchor="middle" fill="#3d3d3d" stroke="#3d3d3d" stroke-width="0.5">Buffalo</text>
<text x="766.6" y="338.0" font-size="19.5" text-anchor="middle" fill="#fff" stroke="#fff" stroke-width="3" stroke-linejoin="round" opacity="0.8">Pittsburgh</text><text x="766.6" y="338.0" font-size="19.5" text-anchor="middle" fill="#3d3d3d" stroke="#3d3d3d" stroke-width="0.5">Pittsburgh</text>
<text x="1028" y="264.0" font-size="19.5" text-anchor="middle" fill="#fff" stroke="#fff" stroke-width="3" stroke-linejoin="round" opacity="0.8">Boston</text><text x="1028" y="264.0" font-size="19.5" text-anchor="middle" fill="#3d3d3d" stroke="#3d3d3d" stroke-width="0.5">Boston</text>
<text x="941.5" y="327.5" font-size="19.5" text-anchor="middle" fill="#fff" stroke="#fff" stroke-width="3" stroke-linejoin="round" opacity="0.8">New York</text><text x="941.5" y="327.5" font-size="19.5" text-anchor="middle" fill="#3d3d3d" stroke="#3d3d3d" stroke-width="0.5">New York</text>
<text x="908" y="357.0" font-size="19.5" text-anchor="middle" fill="#fff" stroke="#fff" stroke-width="3" stroke-linejoin="round" opacity="0.8">Philadelphia</text><text x="908" y="357.0" font-size="19.5" text-anchor="middle" fill="#3d3d3d" stroke="#3d3d3d" stroke-width="0.5">Philadelphia</text>
<text x="913" y="397.0" font-size="19.5" text-anchor="middle" fill="#fff" stroke="#fff" stroke-width="3" stroke-linejoin="round" opacity="0.8">Washington</text><text x="913" y="397.0" font-size="19.5" text-anchor="middle" fill="#3d3d3d" stroke="#3d3d3d" stroke-width="0.5">Washington</text>
<text x="635.3" y="388.6" font-size="19.5" text-anchor="middle" fill="#fff" stroke="#fff" stroke-width="3" stroke-linejoin="round" opacity="0.8">Cincinnati</text><text x="635.3" y="388.6" font-size="19.5" text-anchor="middle" fill="#3d3d3d" stroke="#3d3d3d" stroke-width="0.5">Cincinnati</text>
<text x="570" y="497.0" font-size="19.5" text-anchor="middle" fill="#fff" stroke="#fff" stroke-width="3" stroke-linejoin="round" opacity="0.8">Nashville</text><text x="570" y="497.0" font-size="19.5" text-anchor="middle" fill="#3d3d3d" stroke="#3d3d3d" stroke-width="0.5">Nashville</text>
<text x="474" y="534.0" font-size="19.5" text-anchor="middle" fill="#fff" stroke="#fff" stroke-width="3" stroke-linejoin="round" opacity="0.8">Memphis</text><text x="474" y="534.0" font-size="19.5" text-anchor="middle" fill="#3d3d3d" stroke="#3d3d3d" stroke-width="0.5">Memphis</text>
<text x="639.4" y="583.0" font-size="19.5" text-anchor="middle" fill="#fff" stroke="#fff" stroke-width="3" stroke-linejoin="round" opacity="0.8">Atlanta</text><text x="639.4" y="583.0" font-size="19.5" text-anchor="middle" fill="#3d3d3d" stroke="#3d3d3d" stroke-width="0.5">Atlanta</text>
<text x="806.6" y="510.4" font-size="19.5" text-anchor="middle" fill="#fff" stroke="#fff" stroke-width="3" stroke-linejoin="round" opacity="0.8">Raleigh</text><text x="806.6" y="510.4" font-size="19.5" text-anchor="middle" fill="#3d3d3d" stroke="#3d3d3d" stroke-width="0.5">Raleigh</text>
<text x="875" y="472.5" font-size="19.5" text-anchor="middle" fill="#fff" stroke="#fff" stroke-width="3" stroke-linejoin="round" opacity="0.8">Norfolk</text><text x="875" y="472.5" font-size="19.5" text-anchor="middle" fill="#3d3d3d" stroke="#3d3d3d" stroke-width="0.5">Norfolk</text>
<text x="256.7" y="522.5" font-size="19.5" text-anchor="middle" fill="#fff" stroke="#fff" stroke-width="3" stroke-linejoin="round" opacity="0.8">Oklahoma City</text><text x="256.7" y="522.5" font-size="19.5" text-anchor="middle" fill="#3d3d3d" stroke="#3d3d3d" stroke-width="0.5">Oklahoma City</text>
<text x="277.3" y="616.3" font-size="19.5" text-anchor="middle" fill="#fff" stroke="#fff" stroke-width="3" stroke-linejoin="round" opacity="0.8">Dallas</text><text x="277.3" y="616.3" font-size="19.5" text-anchor="middle" fill="#3d3d3d" stroke="#3d3d3d" stroke-width="0.5">Dallas</text>
<text x="469.4" y="633.4" font-size="19.5" text-anchor="middle" fill="#fff" stroke="#fff" stroke-width="3" stroke-linejoin="round" opacity="0.8">Jackson</text><text x="469.4" y="633.4" font-size="19.5" text-anchor="middle" fill="#3d3d3d" stroke="#3d3d3d" stroke-width="0.5">Jackson</text>
<text x="44" y="311.0" font-size="19.5" text-anchor="start" fill="#fff" stroke="#fff" stroke-width="3" stroke-linejoin="round" opacity="0.8">enne</text><text x="44" y="311.0" font-size="19.5" text-anchor="start" fill="#3d3d3d" stroke="#3d3d3d" stroke-width="0.5">enne</text>
<text x="44" y="364.5" font-size="19.5" text-anchor="start" fill="#fff" stroke="#fff" stroke-width="3" stroke-linejoin="round" opacity="0.8">ver</text><text x="44" y="364.5" font-size="19.5" text-anchor="start" fill="#3d3d3d" stroke="#3d3d3d" stroke-width="0.5">ver</text>
<text x="40" y="515.0" font-size="19.5" text-anchor="start" fill="#fff" stroke="#fff" stroke-width="3" stroke-linejoin="round" opacity="0.8">e</text><text x="40" y="515.0" font-size="19.5" text-anchor="start" fill="#3d3d3d" stroke="#3d3d3d" stroke-width="0.5">e</text>
<text x="185.4" y="394.8" font-size="21.5" font-weight="bold" text-anchor="middle" fill="#fff" stroke="#fff" stroke-width="3" stroke-linejoin="round" opacity="0.8">UNITED</text>
<text x="185.4" y="394.8" font-size="21.5" font-weight="bold" text-anchor="middle" fill="#2f3040">UNITED</text>
<text x="185.4" y="421.8" font-size="21.5" font-weight="bold" text-anchor="middle" fill="#fff" stroke="#fff" stroke-width="3" stroke-linejoin="round" opacity="0.8">STATES OF</text>
<text x="185.4" y="421.8" font-size="21.5" font-weight="bold" text-anchor="middle" fill="#2f3040">STATES OF</text>
<text x="185.4" y="448.8" font-size="21.5" font-weight="bold" text-anchor="middle" fill="#fff" stroke="#fff" stroke-width="3" stroke-linejoin="round" opacity="0.8">AMERICA</text>
<text x="185.4" y="448.8" font-size="21.5" font-weight="bold" text-anchor="middle" fill="#2f3040">AMERICA</text>
<rect x="45" y="173" width="1148" height="54" fill="#ffffff" opacity="0.55"/>
<rect x="45" y="226" width="1148" height="1" fill="#d9d9d9"/>
<text x="174" y="183.0" font-size="19.5" text-anchor="middle" fill="#fff" stroke="#fff" stroke-width="3" stroke-linejoin="round" opacity="0.8">Pierre</text><text x="174" y="183.0" font-size="19.5" text-anchor="middle" fill="#959595" stroke="#959595" stroke-width="0.5">Pierre</text>
<text x="785.3" y="212.4" font-size="19.5" text-anchor="middle" fill="#fff" stroke="#fff" stroke-width="3" stroke-linejoin="round" opacity="0.8">Toronto</text><text x="785.3" y="212.4" font-size="19.5" text-anchor="middle" fill="#9a9a9a" stroke="#9a9a9a" stroke-width="0.5">Toronto</text>
<text x="618.5" y="208" font-size="19.2" text-anchor="middle" fill="#111" stroke="#111" stroke-width="0.4">Patient Zip Codes</text>
<path d="M1157.3 197.5 H1155.5 Q1154.8 197.5 1154.8 198.3 V209.5 Q1154.8 210.5 1155.8 210.5 H1173 Q1174 210.5 1174 209.5 V198.3 Q1174 197.5 1173.2 197.5 H1171.5" stroke="#555" stroke-width="1.5" fill="none" stroke-linejoin="round"/>
<path d="M1164.5 193 V204 M1160.5 200 L1164.5 204 L1168.5 200" stroke="#555" stroke-width="1.4" fill="none"/>
<rect x="1140.5" y="241.5" width="40" height="79" rx="5.5" fill="#fff" stroke="#b4c4d4" stroke-width="2"/>
<rect x="1141.5" y="281" width="38" height="1" fill="#ddd"/>
<path d="M1154.2 261.6 H1167.6 M1160.9 254.9 V268.3" stroke="#333" stroke-width="3.9" stroke-linecap="round"/>
<path d="M1154.2 301.2 H1167.6" stroke="#333" stroke-width="3.9" stroke-linecap="round"/>
<rect x="876.5" y="652" width="316" height="27" fill="#ffffff" opacity="0.55"/>
<text x="1185.5" y="671" font-size="16.1" text-anchor="end" fill="#4d4d4d">© MapTiler © OpenStreetMap contributors</text>
<path d="M46 637 V678 H78.5 Z" fill="#0a93f5"/>
<text x="57.5" y="671" font-size="13" font-family="Liberation Mono" fill="#fff" text-anchor="middle">i</text>
</g></svg><!--MAPEND-->

<!-- age distribution -->
<div class="abs" style="left:1206px;top:171px;width:894px;height:511px;border:5px solid #e8151f;background:#fff"></div>

<svg class="abs" style="left:0;top:0" width="2166" height="700"><rect x="1211" y="226.8" width="884" height="1" fill="#e2e2e2"/><text x="1650.5" y="208" font-size="19.5" fill="#111" stroke="#111" stroke-width="0.4" text-anchor="middle">Age Distribution</text><circle cx="2065.3" cy="201.5" r="13.5" fill="#e3e3e3"/><rect x="2063.9" y="198.2" width="2.4" height="9.4" rx="1.1" fill="#4d4d4d"/><circle cx="2065.1" cy="195" r="1.75" fill="#4d4d4d"/><text x="1265" y="614.1" font-size="16" fill="#333" text-anchor="end">0</text><text x="1265" y="518.5600000000001" font-size="16" fill="#333" text-anchor="end">10</text><text x="1265" y="423.02" font-size="16" fill="#333" text-anchor="end">20</text><text x="1265" y="327.48" font-size="16" fill="#333" text-anchor="end">30</text><path d="M1285.60 608.5 V379.65 Q1285.60 369.65 1295.60 369.65 H1350.30 Q1360.30 369.65 1360.30 379.65 V608.5 Z" fill="#00609c"/><text x="1322.95" y="395.65" font-size="16" fill="#c9d9e8" text-anchor="middle" font-weight="bold">25</text><text x="1322.95" y="631.6" font-size="16" fill="#333" text-anchor="middle">0-2</text><path d="M1368.45 608.5 V608.50 Q1368.45 598.95 1378.00 598.95 H1433.60 Q1443.15 598.95 1443.15 608.50 V608.5 Z" fill="#3b4a5b"/><text x="1405.80" y="595.95" font-size="16" fill="#555" text-anchor="middle">1</text><text x="1405.80" y="631.6" font-size="16" fill="#333" text-anchor="middle">3-5</text><path d="M1451.30 608.5 V599.39 Q1451.30 589.39 1461.30 589.39 H1516.00 Q1526.00 589.39 1526.00 599.39 V608.5 Z" fill="#3e8a81"/><text x="1488.65" y="586.39" font-size="16" fill="#555" text-anchor="middle">2</text><text x="1488.65" y="631.6" font-size="16" fill="#333" text-anchor="middle">6-13</text><path d="M1534.15 608.5 V599.39 Q1534.15 589.39 1544.15 589.39 H1598.85 Q1608.85 589.39 1608.85 599.39 V608.5 Z" fill="#fdeccb"/><text x="1571.50" y="586.39" font-size="16" fill="#555" text-anchor="middle">2</text><text x="1571.50" y="631.6" font-size="16" fill="#333" text-anchor="middle">14-18</text><path d="M1617.00 608.5 V265.00 Q1617.00 255.00 1627.00 255.00 H1681.70 Q1691.70 255.00 1691.70 265.00 V608.5 Z" fill="#5592d2"/><text x="1654.35" y="281.00" font-size="16" fill="#3a4653" text-anchor="middle">37</text><text x="1654.35" y="631.6" font-size="16" fill="#333" text-anchor="middle">19-33</text><path d="M1699.85 608.5 V389.20 Q1699.85 379.20 1709.85 379.20 H1764.55 Q1774.55 379.20 1774.55 389.20 V608.5 Z" fill="#d8f0fc"/><text x="1737.20" y="405.20" font-size="16" fill="#555" text-anchor="middle">24</text><text x="1737.20" y="631.6" font-size="16" fill="#333" text-anchor="middle">34-48</text><path d="M1782.70 608.5 V503.85 Q1782.70 493.85 1792.70 493.85 H1847.40 Q1857.40 493.85 1857.40 503.85 V608.5 Z" fill="#e09e20"/><text x="1820.05" y="519.85" font-size="16" fill="#3a4653" text-anchor="middle">12</text><text x="1820.05" y="631.6" font-size="16" fill="#333" text-anchor="middle">49-64</text><path d="M1865.55 608.5 V561.18 Q1865.55 551.18 1875.55 551.18 H1930.25 Q1940.25 551.18 1940.25 561.18 V608.5 Z" fill="#3a4f7a"/><text x="1902.90" y="577.18" font-size="16" fill="#c9d2e2" text-anchor="middle" font-weight="bold">6</text><text x="1902.90" y="631.6" font-size="16" fill="#333" text-anchor="middle">65-78</text><path d="M1948.40 608.5 V599.39 Q1948.40 589.39 1958.40 589.39 H2013.10 Q2023.10 589.39 2023.10 599.39 V608.5 Z" fill="#a1adba"/><text x="1985.75" y="586.39" font-size="16" fill="#555" text-anchor="middle">2</text><text x="1985.75" y="631.6" font-size="16" fill="#333" text-anchor="middle">79+</text></svg>
<!-- table card -->
<div class="abs" style="left:45px;top:692px;width:2050px;height:414px;overflow:hidden">
<div class="abs" style="left:0;top:0;width:2050px;height:440px;background:#fff;border:1px solid #e6e6e6;border-radius:3.5px"></div>
<div class="abs" style="left:22px;top:14px;width:27px;height:27px;border-radius:50%;background:#e3e3e3"></div>
<div class="abs" style="left:34.3px;top:23.5px;width:2.4px;height:10px;border-radius:1.1px;background:#4d4d4d"></div><div class="abs" style="left:33.75px;top:18.7px;width:3.5px;height:3.5px;border-radius:50%;background:#4d4d4d"></div>
<div class="abs" style="left:88px;top:16px;font-size:19px;line-height:24px;color:#222;white-space:nowrap">5 columns</div>
<svg class="abs" style="left:187px;top:23px" width="12" height="10"><path d="M2 3 L6 7 L10 3" stroke="#333" stroke-width="1.6" fill="none"/></svg>
<div class="abs" style="left:0;top:54px;width:2050px;height:46px;background:#93b8e3"></div>
<div class="abs" style="left:14px;top:67.3px;font-size:17.5px;line-height:22px;color:#333;-webkit-text-stroke:0.55px #333;letter-spacing:0.2px;white-space:nowrap">Patient</div>
<div class="abs" style="left:423.5px;top:67.3px;font-size:17.5px;line-height:22px;color:#333;-webkit-text-stroke:0.55px #333;letter-spacing:0.2px;white-space:nowrap">Age</div>
<div class="abs" style="left:833px;top:67.3px;font-size:17.5px;line-height:22px;color:#333;-webkit-text-stroke:0.55px #333;letter-spacing:0.2px;white-space:nowrap">Provider</div>
<div class="abs" style="left:1242.5px;top:67.3px;font-size:17.5px;line-height:22px;color:#333;-webkit-text-stroke:0.55px #333;letter-spacing:0.2px;white-space:nowrap">Last Visit Date</div>
<div class="abs" style="left:1652px;top:67.3px;font-size:17.5px;line-height:22px;color:#333;-webkit-text-stroke:0.55px #333;letter-spacing:0.2px;white-space:nowrap">Cell Phone #</div>
<div class="abs" style="left:1px;top:100.00px;width:2048px;height:37.86px;background:#f2f2f2"></div>
<div class="abs" style="left:12.5px;top:108.00px;font-size:17px;line-height:22px;color:#606060;white-space:nowrap">Acree, Dylan : 278429653</div>
<div class="abs" style="left:421.5px;top:108.00px;font-size:17px;line-height:22px;color:#606060;white-space:nowrap">1</div>
<div class="abs" style="left:831px;top:108.00px;font-size:17px;line-height:22px;color:#606060;white-space:nowrap">N/A</div>
<div class="abs" style="left:1240.5px;top:108.00px;font-size:17px;line-height:22px;color:#606060;white-space:nowrap">25 April 2024</div>
<div class="abs" style="left:1650px;top:108.00px;font-size:17px;line-height:22px;color:#606060;white-space:nowrap">4109895623</div>
<div class="abs" style="left:1px;top:137.86px;width:2048px;height:37.86px;background:#fff"></div>
<div class="abs" style="left:12.5px;top:145.86px;font-size:17px;line-height:22px;color:#606060;white-space:nowrap">Anderson, Jean : 278354084</div>
<div class="abs" style="left:421.5px;top:145.86px;font-size:17px;line-height:22px;color:#606060;white-space:nowrap">60</div>
<div class="abs" style="left:831px;top:145.86px;font-size:17px;line-height:22px;color:#606060;white-space:nowrap">N/A</div>
<div class="abs" style="left:1240.5px;top:145.86px;font-size:17px;line-height:22px;color:#606060;white-space:nowrap">15 April 2024</div>
<div class="abs" style="left:1650px;top:145.86px;font-size:17px;line-height:22px;color:#606060;white-space:nowrap">N/A</div>
<div class="abs" style="left:1px;top:175.72px;width:2048px;height:37.86px;background:#f2f2f2"></div>
<div class="abs" style="left:12.5px;top:183.72px;font-size:17px;line-height:22px;color:#606060;white-space:nowrap">Angela, Angela : 278977497</div>
<div class="abs" style="left:421.5px;top:183.72px;font-size:17px;line-height:22px;color:#606060;white-space:nowrap">72</div>
<div class="abs" style="left:831px;top:183.72px;font-size:17px;line-height:22px;color:#606060;white-space:nowrap">N/A</div>
<div class="abs" style="left:1240.5px;top:183.72px;font-size:17px;line-height:22px;color:#606060;white-space:nowrap">18 June 2024</div>
<div class="abs" style="left:1650px;top:183.72px;font-size:17px;line-height:22px;color:#606060;white-space:nowrap">N/A</div>
<div class="abs" style="left:1px;top:213.58px;width:2048px;height:37.86px;background:#fff"></div>
<div class="abs" style="left:12.5px;top:221.58px;font-size:17px;line-height:22px;color:#606060;white-space:nowrap">Bane, Desmond : 277518793</div>
<div class="abs" style="left:421.5px;top:221.58px;font-size:17px;line-height:22px;color:#606060;white-space:nowrap">26</div>
<div class="abs" style="left:831px;top:221.58px;font-size:17px;line-height:22px;color:#606060;white-space:nowrap">N/A</div>
<div class="abs" style="left:1240.5px;top:221.58px;font-size:17px;line-height:22px;color:#606060;white-space:nowrap">24 October 2024</div>
<div class="abs" style="left:1650px;top:221.58px;font-size:17px;line-height:22px;color:#606060;white-space:nowrap">901-333-3333</div>
<div class="abs" style="left:1px;top:251.44px;width:2048px;height:37.86px;background:#f2f2f2"></div>
<div class="abs" style="left:12.5px;top:259.44px;font-size:17px;line-height:22px;color:#606060;white-space:nowrap">Barnes, Carrie : 279241586</div>
<div class="abs" style="left:421.5px;top:259.44px;font-size:17px;line-height:22px;color:#606060;white-space:nowrap">30</div>
<div class="abs" style="left:831px;top:259.44px;font-size:17px;line-height:22px;color:#606060;white-space:nowrap">N/A</div>
<div class="abs" style="left:1240.5px;top:259.44px;font-size:17px;line-height:22px;color:#606060;white-space:nowrap">26 July 2024</div>
<div class="abs" style="left:1650px;top:259.44px;font-size:17px;line-height:22px;color:#606060;white-space:nowrap">410-858-5902</div>
<div class="abs" style="left:1px;top:289.30px;width:2048px;height:37.86px;background:#fff"></div>
<div class="abs" style="left:12.5px;top:297.30px;font-size:17px;line-height:22px;color:#606060;white-space:nowrap">Bob, Sponge : 279698346</div>
<div class="abs" style="left:421.5px;top:297.30px;font-size:17px;line-height:22px;color:#606060;white-space:nowrap">90</div>
<div class="abs" style="left:831px;top:297.30px;font-size:17px;line-height:22px;color:#606060;white-space:nowrap">N/A</div>
<div class="abs" style="left:1240.5px;top:297.30px;font-size:17px;line-height:22px;color:#606060;white-space:nowrap">24 September 2024</div>
<div class="abs" style="left:1650px;top:297.30px;font-size:17px;line-height:22px;color:#606060;white-space:nowrap">N/A</div>
<div class="abs" style="left:1px;top:327.16px;width:2048px;height:37.86px;background:#f2f2f2"></div>
<div class="abs" style="left:12.5px;top:335.16px;font-size:17px;line-height:22px;color:#606060;white-space:nowrap">Bobson, Billy : 279525806</div>
<div class="abs" style="left:421.5px;top:335.16px;font-size:17px;line-height:22px;color:#606060;white-space:nowrap">84</div>
<div class="abs" style="left:831px;top:335.16px;font-size:17px;line-height:22px;color:#606060;white-space:nowrap">N/A</div>
<div class="abs" style="left:1240.5px;top:335.16px;font-size:17px;line-height:22px;color:#606060;white-space:nowrap">1 September 2024</div>
<div class="abs" style="left:1650px;top:335.16px;font-size:17px;line-height:22px;color:#606060;white-space:nowrap">4100000000</div>
<div class="abs" style="left:1px;top:365.02px;width:2048px;height:37.86px;background:#fff"></div>
<div class="abs" style="left:12.5px;top:373.02px;font-size:17px;line-height:22px;color:#606060;white-space:nowrap">Brown, Julie : 278010305</div>
<div class="abs" style="left:421.5px;top:373.02px;font-size:17px;line-height:22px;color:#606060;white-space:nowrap">57</div>
<div class="abs" style="left:831px;top:373.02px;font-size:17px;line-height:22px;color:#606060;white-space:nowrap">N/A</div>
<div class="abs" style="left:1240.5px;top:373.02px;font-size:17px;line-height:22px;color:#606060;white-space:nowrap">4 March 2024</div>
<div class="abs" style="left:1650px;top:373.02px;font-size:17px;line-height:22px;color:#606060;white-space:nowrap">N/A</div>
<div class="abs" style="left:1px;top:402.88px;width:2048px;height:37.86px;background:#f2f2f2"></div>
<div class="abs" style="left:12.5px;top:410.88px;font-size:17px;line-height:22px;color:#606060;white-space:nowrap">Brown, Kevin : 278000001</div>
<div class="abs" style="left:421.5px;top:410.88px;font-size:17px;line-height:22px;color:#606060;white-space:nowrap">45</div>
<div class="abs" style="left:831px;top:410.88px;font-size:17px;line-height:22px;color:#606060;white-space:nowrap">N/A</div>
<div class="abs" style="left:1240.5px;top:410.88px;font-size:17px;line-height:22px;color:#606060;white-space:nowrap">4 March 2024</div>
<div class="abs" style="left:1650px;top:410.88px;font-size:17px;line-height:22px;color:#606060;white-space:nowrap">N/A</div>
</div>

<!-- content scrollbar -->
<div class="abs" style="left:2122px;top:0;width:25px;height:1106px;background:#f0f0f0"></div>
<div class="abs" style="left:2124px;top:252px;width:21px;height:768px;background:#c1c1c1"></div>

<!-- sidebar -->
<div class="abs" style="left:2166px;top:0;width:66px;height:1120px;background:#fff;border-left:1px solid #e3e3e3"></div>
<!-- outer scrollbar -->
<div class="abs" style="left:2231px;top:0;width:25px;height:1120px;background:#f0f0f0"></div>
<div class="abs" style="left:2233px;top:251px;width:21px;height:869px;background:#c1c1c1"></div>
<svg class="abs" style="left:0;top:0" width="2256" height="1120">
<path d="M2205.3 188 L2197.8 195 L2205.3 202" stroke="#0d3320" stroke-width="2.4" fill="none"/>
<path d="M2181 239.6 H2200 Q2202.9 239.6 2202.9 242.5 V254.8 Q2202.9 257.7 2200 257.7 H2189.7 L2183.3 263 V257.7 H2181 Q2178.4 257.7 2178.4 254.8 V242.5 Q2178.4 239.6 2181 239.6 Z" stroke="#f47636" stroke-width="1.8" fill="none" stroke-linejoin="round"/><path d="M2203 242.8 H2204.5 Q2207.8 242.8 2207.8 246.5 V258.5 Q2207.8 262.1 2204.5 262.1 H2203 V267.5 L2194.5 262.1 H2188 Q2186 262.1 2185.6 260.2" stroke="#f47636" stroke-width="1.8" fill="none" stroke-linejoin="round"/>
<rect x="2170" y="283.5" width="48" height="1" fill="#e6e6e6"/>
<circle cx="2192.5" cy="318" r="25.5" fill="#00609c"/><text x="2192.5" y="325.20" font-size="20" fill="#fff" text-anchor="middle" textLength="13.5" lengthAdjust="spacingAndGlyphs">JJ</text>
<circle cx="2192.5" cy="383.7" r="25.5" fill="#00609c"/><text x="2192.5" y="390.90" font-size="20" fill="#fff" text-anchor="middle" textLength="24.4" lengthAdjust="spacingAndGlyphs">JM</text>
<circle cx="2192.5" cy="449.4" r="25.5" fill="#00609c"/><text x="2192.5" y="456.60" font-size="20" fill="#fff" text-anchor="middle" textLength="25.8" lengthAdjust="spacingAndGlyphs">BE</text>
<circle cx="2192.5" cy="515" r="25.5" fill="#00609c"/><text x="2192.5" y="522.20" font-size="20" fill="#fff" text-anchor="middle" textLength="18.5" lengthAdjust="spacingAndGlyphs">PJ</text>
<circle cx="2192.5" cy="580.8" r="25.5" fill="#00609c"/><text x="2192.5" y="588.00" font-size="20" fill="#fff" text-anchor="middle" textLength="18.5" lengthAdjust="spacingAndGlyphs">PJ</text>
<circle cx="2178" cy="633.4" r="11.2" fill="#00609c"/><text x="2178" y="637.18" font-size="10.5" fill="#fff" text-anchor="middle" textLength="12.5" lengthAdjust="spacingAndGlyphs">AR</text><circle cx="2206.8" cy="633.4" r="11.2" fill="#00609c"/><text x="2206.8" y="637.18" font-size="10.5" fill="#fff" text-anchor="middle" textLength="12.5" lengthAdjust="spacingAndGlyphs">BE</text><circle cx="2178" cy="659.4" r="11.2" fill="#00609c"/><text x="2178" y="663.18" font-size="10.5" fill="#fff" text-anchor="middle" textLength="12" lengthAdjust="spacingAndGlyphs">JM</text><circle cx="2206.8" cy="659.4" r="11.2" fill="#00609c"/><text x="2206.8" y="663.18" font-size="10.5" fill="#fff" text-anchor="middle" textLength="9.5" lengthAdjust="spacingAndGlyphs">PJ</text>
<circle cx="2192.5" cy="711.4" r="25.5" fill="#00609c"/><text x="2192.5" y="718.60" font-size="20" fill="#fff" text-anchor="middle" textLength="13.5" lengthAdjust="spacingAndGlyphs">JJ</text>
<circle cx="2178" cy="763.4" r="11.2" fill="#00609c"/><text x="2178" y="767.18" font-size="10.5" fill="#fff" text-anchor="middle" textLength="12.5" lengthAdjust="spacingAndGlyphs">AR</text><circle cx="2206.8" cy="763.4" r="11.2" fill="#00609c"/><text x="2206.8" y="767.18" font-size="10.5" fill="#fff" text-anchor="middle" textLength="12.5" lengthAdjust="spacingAndGlyphs">BE</text><circle cx="2178" cy="789.4" r="11.2" fill="#00609c"/><text x="2178" y="793.18" font-size="10.5" fill="#fff" text-anchor="middle" textLength="12" lengthAdjust="spacingAndGlyphs">JM</text><circle cx="2206.8" cy="789.4" r="11.2" fill="#00609c"/><text x="2206.8" y="793.18" font-size="10.5" fill="#fff" text-anchor="middle" textLength="9.5" lengthAdjust="spacingAndGlyphs">PJ</text>
<circle cx="2192.5" cy="842.3" r="25.5" fill="#00609c"/><text x="2192.5" y="849.50" font-size="20" fill="#fff" text-anchor="middle" textLength="18.5" lengthAdjust="spacingAndGlyphs">PJ</text>
<clipPath id="avc"><rect x="2167" y="860" width="64" height="44"/></clipPath>
<g clip-path="url(#avc)"><circle cx="2192.5" cy="908.5" r="25.5" fill="#00609c"/><text x="2192.5" y="915.70" font-size="20" fill="#fff" text-anchor="middle" textLength="25" lengthAdjust="spacingAndGlyphs">AR</text></g>
<rect x="2220" y="221.5" width="8.6" height="444" rx="4.3" fill="#c4c4c4"/>
<rect x="2173" y="916.2" width="53" height="1" fill="#e3e3e3"/>
<rect x="2173" y="982" width="53" height="1" fill="#e3e3e3"/>
<rect x="2173" y="1047" width="53" height="1" fill="#e3e3e3"/>
<path d="M2207.2 943 A12.6 12.6 0 1 1 2203 938.5" stroke="#f47b3f" stroke-width="1.9" fill="none"/>
<path d="M2189.5 947 L2195.5 952.5 L2207 940" stroke="#f47b3f" stroke-width="1.9" fill="none"/>
<path d="M2185 1006.5 H2207 Q2209 1006.5 2209 1008.5 V1021.5 Q2209 1023.5 2207 1023.5 H2193 L2188 1027.5 V1023.5 H2185 Q2183 1023.5 2183 1021.5 V1008.5 Q2183 1006.5 2185 1006.5 Z" stroke="#f47b3f" stroke-width="1.9" fill="none" stroke-linejoin="round"/>
<rect x="2189.5" y="1011.8" width="13" height="1.8" fill="#f47b3f"/><rect x="2189.5" y="1016.3" width="13" height="1.8" fill="#f47b3f"/>
<circle cx="2196" cy="1080.7" r="12.6" stroke="#f47b3f" stroke-width="1.9" fill="none"/>
<path d="M2192 1076.5 Q2192 1072 2196.3 1072 Q2200.5 1072 2200.5 1076 Q2200.5 1078.5 2197.5 1080 Q2196.2 1080.8 2196.2 1083.5" stroke="#f47b3f" stroke-width="1.9" fill="none"/>
<circle cx="2196.2" cy="1087.3" r="1.3" fill="#f47b3f"/>
<path d="M2238 16.8 L2243.6 11 L2249.2 16.8 Z" fill="#505050"/>
<path d="M2129 1090 L2134.6 1095.5 L2140.2 1090 Z" fill="#505050"/>
</svg>
<div class="abs" style="left:0;top:0;width:2231px;height:1px;background:#dcdcdc"></div>
</body></html>
